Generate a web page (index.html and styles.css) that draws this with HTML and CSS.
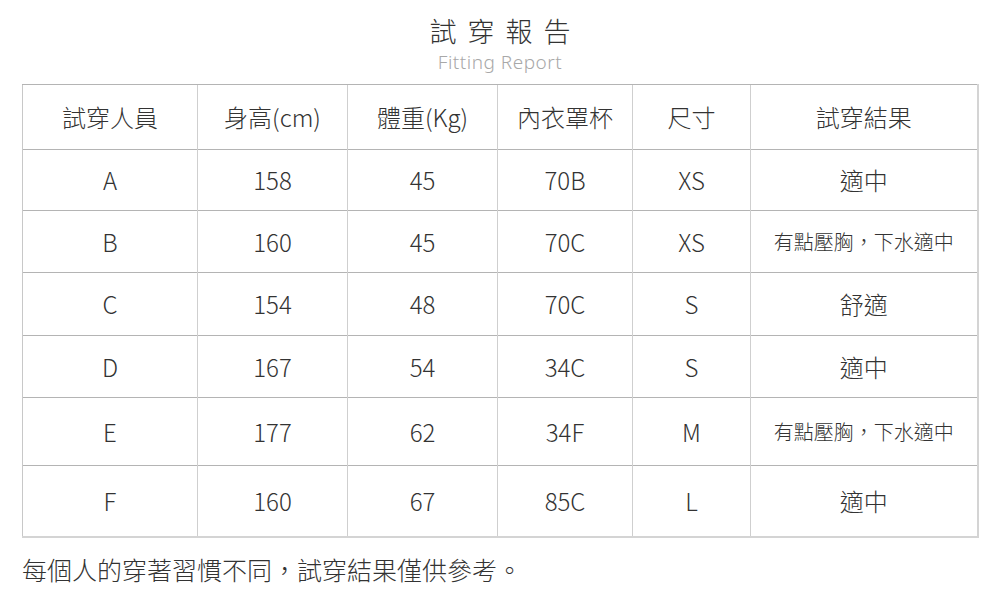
FILE: index.html
```html
<!DOCTYPE html>
<html lang="zh-Hant">
<head>
<meta charset="utf-8">
<link rel="stylesheet" href="styles.css">
</head>
<body>
<div class="page">
  <header class="head">
    <h1 class="title">試穿報告</h1>
    <p class="subtitle">Fitting Report</p>
  </header>
  <table class="report">
    <colgroup>
      <col class="c1"><col class="c2"><col class="c3"><col class="c4"><col class="c5"><col class="c6">
    </colgroup>
    <thead>
      <tr class="r-head"><th>試穿人員</th><th>身高(cm)</th><th>體重(Kg)</th><th>內衣罩杯</th><th>尺寸</th><th>試穿結果</th></tr>
    </thead>
    <tbody>
      <tr class="r1"><td>A</td><td>158</td><td>45</td><td>70B</td><td>XS</td><td>適中</td></tr>
      <tr class="r2"><td>B</td><td>160</td><td>45</td><td>70C</td><td>XS</td><td class="small">有點壓胸，下水適中</td></tr>
      <tr class="r3"><td>C</td><td>154</td><td>48</td><td>70C</td><td>S</td><td>舒適</td></tr>
      <tr class="r4"><td>D</td><td>167</td><td>54</td><td>34C</td><td>S</td><td>適中</td></tr>
      <tr class="r5"><td>E</td><td>177</td><td>62</td><td>34F</td><td>M</td><td class="small">有點壓胸，下水適中</td></tr>
      <tr class="r6"><td>F</td><td>160</td><td>67</td><td>85C</td><td>L</td><td>適中</td></tr>
    </tbody>
  </table>
  <p class="note">每個人的穿著習慣不同，試穿結果僅供參考。</p>
</div>
</body>
</html>
```
FILE: styles.css
```css
html, body {
  margin: 0;
  padding: 0;
  background: #ffffff;
}
body {
  font-family: "Noto Sans CJK TC", "Noto Sans", sans-serif;
  font-weight: 300;
  color: #333333;
}
.page {
  width: 1000px;
  padding: 0 22px 0 22px;
  box-sizing: border-box;
}
.head {
  text-align: center;
  padding-top: 12px;
  height: 84px;
  box-sizing: border-box;
}
.title {
  margin: 0;
  font-size: 27px;
  font-weight: 300;
  letter-spacing: 11px;
  margin-right: -11px;
  line-height: 38px;
  color: #333;
}
.subtitle {
  margin: 0;
  font-family: "Noto Sans", sans-serif;
  font-size: 19px;
  font-weight: 300;
  color: #a8a8a8;
  line-height: 24px;
  letter-spacing: 0.5px;
}
.report {
  width: 956px;
  border-collapse: collapse;
  table-layout: fixed;
  border-right: 2px solid #d4d4d4;
  border-bottom: 2px solid #d4d4d4;
}
.c1 { width: 175px; }
.c2 { width: 150px; }
.c3 { width: 150px; }
.c4 { width: 135px; }
.c5 { width: 118px; }
.c6 { width: 227px; }
.report th, .report td {
  border-left: 1px solid #cfcfcf;
  border-top: 1px solid #b4b4b4;
  text-align: center;
  vertical-align: middle;
  font-size: 24px;
  font-weight: 300;
  color: #333;
  padding: 0;
  line-height: 30px;
}
.report th:first-child, .report td:first-child {
  border-left: 1px solid #c8c8c8;
}
.report .small {
  font-size: 20px;
}
.r-head { height: 65px; }
.r1 { height: 61px; }
.r2 { height: 62px; }
.r3 { height: 63px; }
.r4 { height: 62px; }
.r5 { height: 68px; }
.r6 { height: 71px; }
.note {
  margin: 0;
  padding-top: 14px;
  font-size: 25px;
  line-height: 34px;
  color: #333;
}
```
